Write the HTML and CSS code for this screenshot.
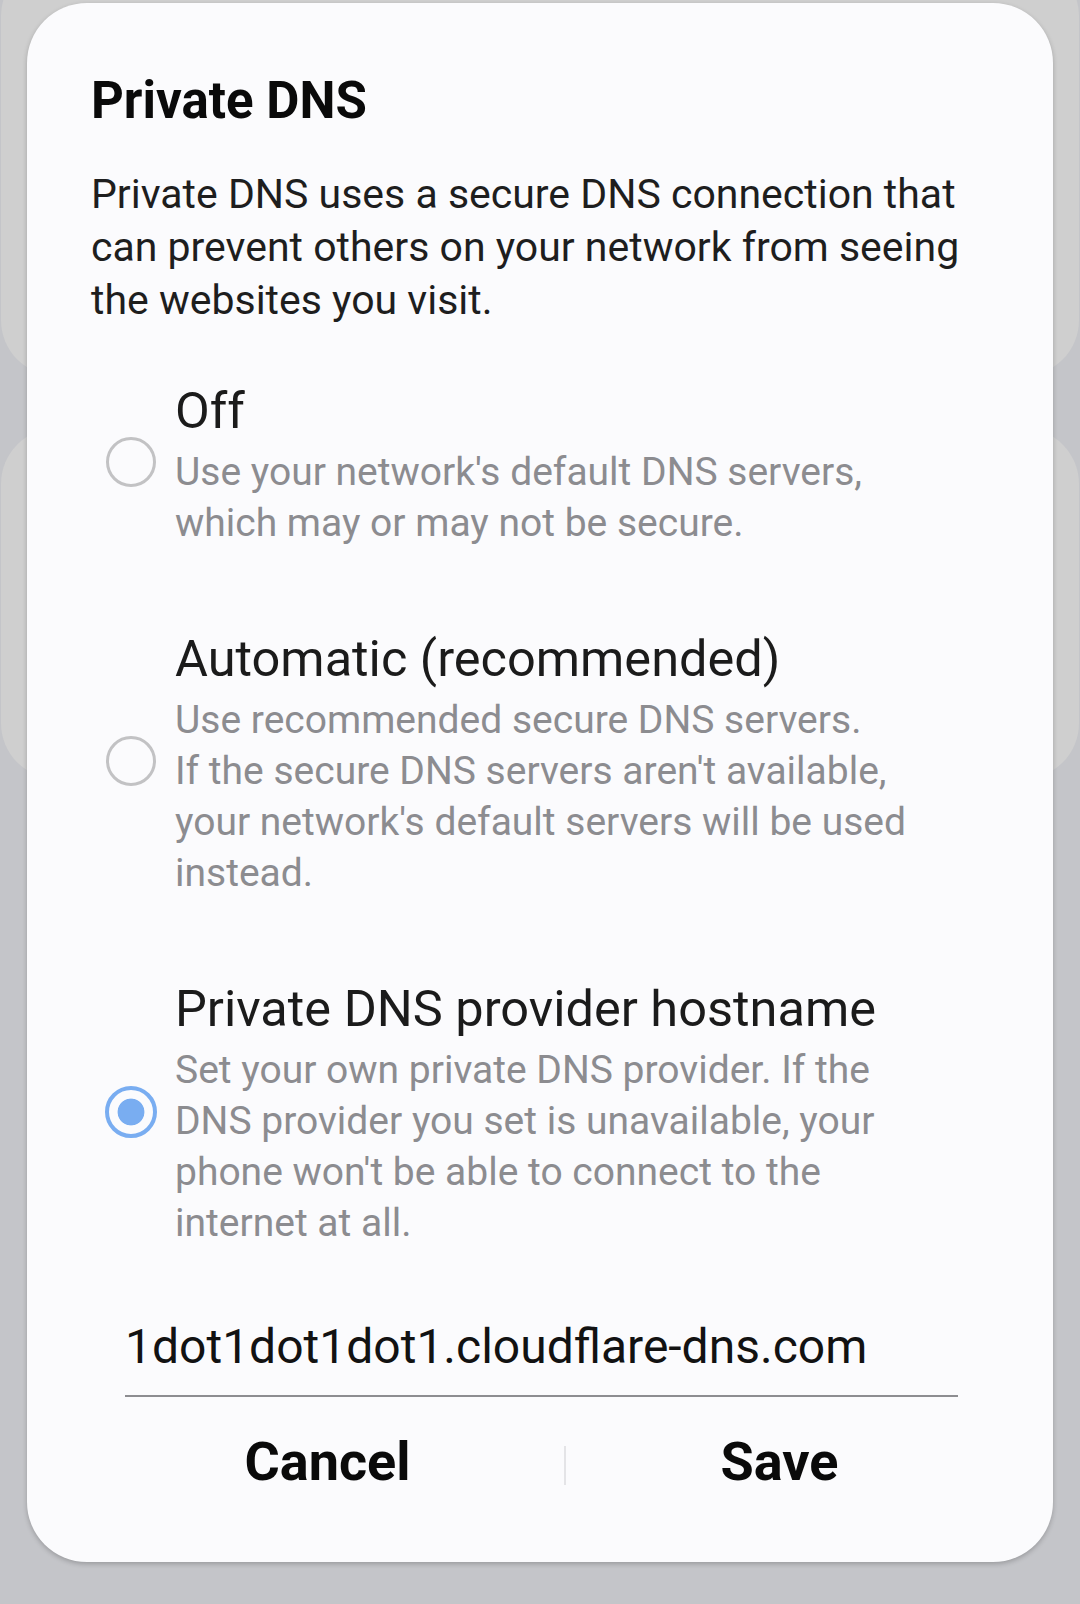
FILE: index.html
```html
<!DOCTYPE html>
<html lang="en">
<head>
<meta charset="utf-8">
<title>Private DNS</title>
<link rel="stylesheet" href="styles.css">
</head>
<body>
<div class="scene">
  <div class="backdrop">
    <div class="bg-card bg-card-1"></div>
    <div class="bg-card bg-card-2"></div>
  </div>
  <div class="dialog" role="dialog" aria-labelledby="dlg-title">
    <h1 class="dialog-title" id="dlg-title">Private DNS</h1>
    <p class="dialog-body">Private DNS uses a secure DNS connection that can prevent others on your network from seeing the websites you visit.</p>
    <div class="options">
      <div class="option option-off">
        <span class="radio"></span>
        <div class="option-text">
          <div class="option-title">Off</div>
          <div class="option-desc">Use your network's default DNS servers, which may or may not be secure.</div>
        </div>
      </div>
      <div class="option option-auto">
        <span class="radio"></span>
        <div class="option-text">
          <div class="option-title">Automatic (recommended)</div>
          <div class="option-desc">Use recommended secure DNS servers.<br>If the secure DNS servers aren't available, your network's default servers will be used instead.</div>
        </div>
      </div>
      <div class="option option-host">
        <span class="radio radio-checked"></span>
        <div class="option-text">
          <div class="option-title">Private DNS provider hostname</div>
          <div class="option-desc">Set your own private DNS provider. If the DNS provider you set is unavailable, your phone won't be able to connect to the internet at all.</div>
        </div>
      </div>
    </div>
    <div class="host-field">1dot1dot1dot1.cloudflare-dns.com</div>
    <div class="buttons">
      <div class="btn">Cancel</div>
      <div class="btn-divider"></div>
      <div class="btn btn-save">Save</div>
    </div>
  </div>
</div>
</body>
</html>
```

FILE: styles.css
```css
* { box-sizing: border-box; }
html, body { margin: 0; padding: 0; }
body {
  background: #c4c5c9;
  font-family: Roboto, "Noto Sans", "Liberation Sans", sans-serif;
}
.scene {
  position: relative;
  width: 1080px;
  height: 1604px;
  overflow: hidden;
  background: #c4c5c9;
}
.backdrop {
  display: flex;
  flex-direction: column;
  padding: 0 1px;
}
.bg-card {
  background: #cfcfcf;
  border-radius: 56px;
}
.bg-card-1 { margin-top: -40px; height: 416px; }
.bg-card-2 { margin-top: 52px; height: 351px; }

.dialog {
  position: absolute;
  top: 3px;
  left: 27px;
  width: 1026px;
  height: 1559px;
  background: #fbfbfd;
  border-radius: 60px;
  box-shadow: 0 2px 5px rgba(0,0,0,0.22);
  padding: 68px 64px 0 64px;
  display: flex;
  flex-direction: column;
}
.dialog-title {
  margin: 0;
  font-size: 51px;
  line-height: 60px;
  font-weight: 700;
  color: #0a0a0a;
}
.dialog-body {
  margin: 37px 0 0 0;
  font-size: 41px;
  line-height: 53px;
  color: #1e1e1e;
  width: 890px;
}
.options {
  margin-top: 52px;
  display: flex;
  flex-direction: column;
  gap: 78px;
}
.option {
  display: flex;
  align-items: center;
}
.radio {
  flex: none;
  width: 50px;
  height: 50px;
  border-radius: 50%;
  border: 3.5px solid #c2c2c4;
  margin-left: 15px;
  margin-right: 19px;
  margin-top: -4px;
}
.radio-checked {
  border: 4.5px solid #79adf1;
  background: radial-gradient(circle, #79adf1 0 13px, transparent 13.8px);
  width: 52px;
  height: 52px;
  margin-left: 14px;
  margin-right: 18px;
  margin-top: -2px;
}
.option-text { width: 737px; }
.option-title {
  font-size: 50.5px;
  line-height: 64px;
  color: #1b1b1b;
  white-space: nowrap;
}
.option-desc {
  margin-top: 4px;
  font-size: 39px;
  line-height: 51px;
  color: #8c8c90;
}
.host-field {
  margin: 68px 31px 0 34px;
  font-size: 48px;
  line-height: 60px;
  color: #121212;
  padding-bottom: 18px;
  border-bottom: 2.5px solid #8d8d91;
}
.buttons {
  margin-top: 33px;
  display: grid;
  grid-template-columns: 473px 2px 1fr;
  align-items: center;
}
.btn {
  text-align: center;
  font-size: 54px;
  line-height: 64px;
  font-weight: 700;
  color: #0a0a0a;
}
.btn-save { padding-left: 4px; }
.btn-divider {
  height: 39px;
  background: #e4e4e7;
  margin-top: 6px;
}
```
